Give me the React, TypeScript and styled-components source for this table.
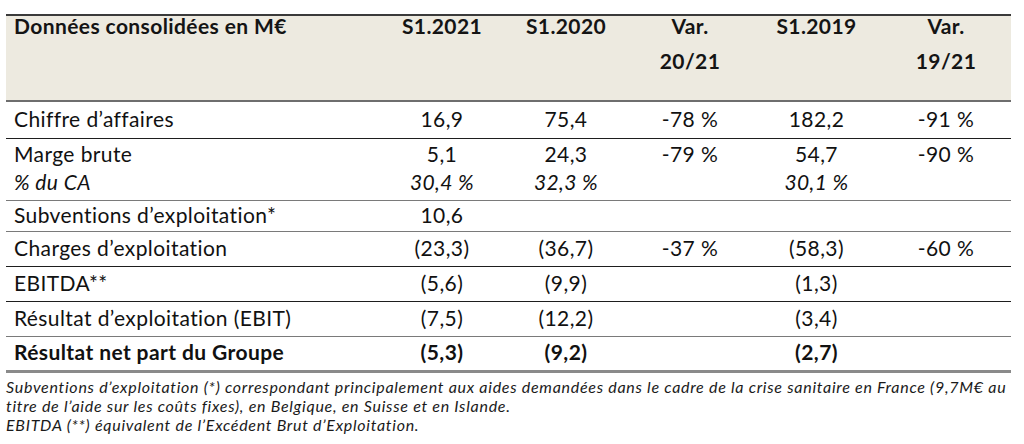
import React from 'react';
import styled, { createGlobalStyle } from 'styled-components';

const GlobalStyle = createGlobalStyle`
  html, body {
    margin: 0;
    padding: 0;
    background: #ffffff;
  }
  body {
    font-family: Lato, 'Liberation Sans', sans-serif;
    color: #111111;
  }
`;

const Page = styled.div`
  width: 1024px;
  padding: 14px 13px 0 6px;
  box-sizing: border-box;
`;

const Table = styled.table`
  width: 1005px;
  border-collapse: collapse;
  table-layout: fixed;
  border-top: 2px solid #3a3a3a;
  border-bottom: 3px solid #8a8a8a;
`;

const HeadRow = styled.tr`
  height: 86px;
  background: #edeae0;
  border-bottom: 2px solid #6e6e6e;
`;

const HeadCell = styled.th<{ $left?: boolean }>`
  font-size: 21px;
  font-weight: 700;
  letter-spacing: 0.4px;
  line-height: 35px;
  vertical-align: top;
  text-align: ${(p) => (p.$left ? 'left' : 'center')};
  padding: 0 0 0 ${(p) => (p.$left ? '8px' : '0')};
  color: #141414;
`;

const HeadText = styled.div`
  margin-top: -8px;
`;

const Row = styled.tr<{ $line: 'dark' | 'grey'; $h: number }>`
  height: ${(p) => p.$h}px;
  border-bottom: ${(p) => (p.$line === 'dark' ? '1.5px solid #1e1e1e' : '1.5px solid #7a7a7a')};
  &:last-child {
    border-bottom: none;
  }
`;

const Cell = styled.td<{ $left?: boolean; $bold?: boolean }>`
  font-size: 21px;
  letter-spacing: 0.4px;
  line-height: 28px;
  font-weight: ${(p) => (p.$bold ? 700 : 400)};
  text-align: ${(p) => (p.$left ? 'left' : 'center')};
  padding: 0 0 2px ${(p) => (p.$left ? '8px' : '0')};
  vertical-align: middle;
  white-space: nowrap;
`;

const Sub = styled.div`
  font-style: italic;
`;

const Notes = styled.div`
  padding: 4px 0 0 0;
  font-size: 16px;
  letter-spacing: 0.72px;
  font-style: italic;
  line-height: 19.2px;
  color: #1a1a1a;
`;

const NoteLine = styled.div`
  white-space: nowrap;
`;

type Line = {
  label: string;
  values: string[];
  sub?: string[];
  subLabel?: string;
  line: 'dark' | 'grey';
  h: number;
  bold?: boolean;
};

const lines: Line[] = [
  { label: 'Chiffre d’affaires', values: ['16,9', '75,4', '-78 %', '182,2', '-91 %'], line: 'dark', h: 37 },
  {
    label: 'Marge brute',
    values: ['5,1', '24,3', '-79 %', '54,7', '-90 %'],
    subLabel: '% du CA',
    sub: ['30,4 %', '32,3 %', '', '30,1 %', ''],
    line: 'grey',
    h: 62,
  },
  { label: 'Subventions d’exploitation*', values: ['10,6', '', '', '', ''], line: 'grey', h: 30 },
  { label: 'Charges d’exploitation', values: ['(23,3)', '(36,7)', '-37 %', '(58,3)', '-60 %'], line: 'dark', h: 35 },
  { label: 'EBITDA**', values: ['(5,6)', '(9,9)', '', '(1,3)', ''], line: 'dark', h: 35 },
  { label: 'Résultat d’exploitation (EBIT)', values: ['(7,5)', '(12,2)', '', '(3,4)', ''], line: 'grey', h: 35 },
  { label: 'Résultat net part du Groupe', values: ['(5,3)', '(9,2)', '', '(2,7)', ''], line: 'grey', h: 35, bold: true },
];

const App: React.FC = () => {
  return (
    <Page>
      <GlobalStyle />
      <Table>
        <colgroup>
          <col style={{ width: 374 }} />
          <col style={{ width: 124 }} />
          <col style={{ width: 124 }} />
          <col style={{ width: 124 }} />
          <col style={{ width: 129 }} />
          <col style={{ width: 130 }} />
        </colgroup>
        <thead>
          <HeadRow>
            <HeadCell $left><HeadText>Données consolidées en M€</HeadText></HeadCell>
            <HeadCell><HeadText>S1.2021</HeadText></HeadCell>
            <HeadCell><HeadText>S1.2020</HeadText></HeadCell>
            <HeadCell><HeadText>Var.<br />20/21</HeadText></HeadCell>
            <HeadCell><HeadText>S1.2019</HeadText></HeadCell>
            <HeadCell><HeadText>Var.<br />19/21</HeadText></HeadCell>
          </HeadRow>
        </thead>
        <tbody>
          {lines.map((l) => (
            <Row key={l.label} $line={l.line} $h={l.h}>
              <Cell $left $bold={l.bold}>
                {l.label}
                {l.subLabel && <Sub>{l.subLabel}</Sub>}
              </Cell>
              {l.values.map((v, i) => (
                <Cell key={i} $bold={l.bold}>
                  {v}
                  {l.sub && <Sub>{l.sub[i] || '\u00a0'}</Sub>}
                </Cell>
              ))}
            </Row>
          ))}
        </tbody>
      </Table>
      <Notes>
        <NoteLine>
          Subventions d’exploitation (*) correspondant principalement aux aides demandées dans le cadre de la crise sanitaire en France (9,7M€ au
        </NoteLine>
        <NoteLine>titre de l’aide sur les coûts fixes), en Belgique, en Suisse et en Islande.</NoteLine>
        <NoteLine>EBITDA (**) équivalent de l’Excédent Brut d’Exploitation.</NoteLine>
      </Notes>
    </Page>
  );
};

export default App;
